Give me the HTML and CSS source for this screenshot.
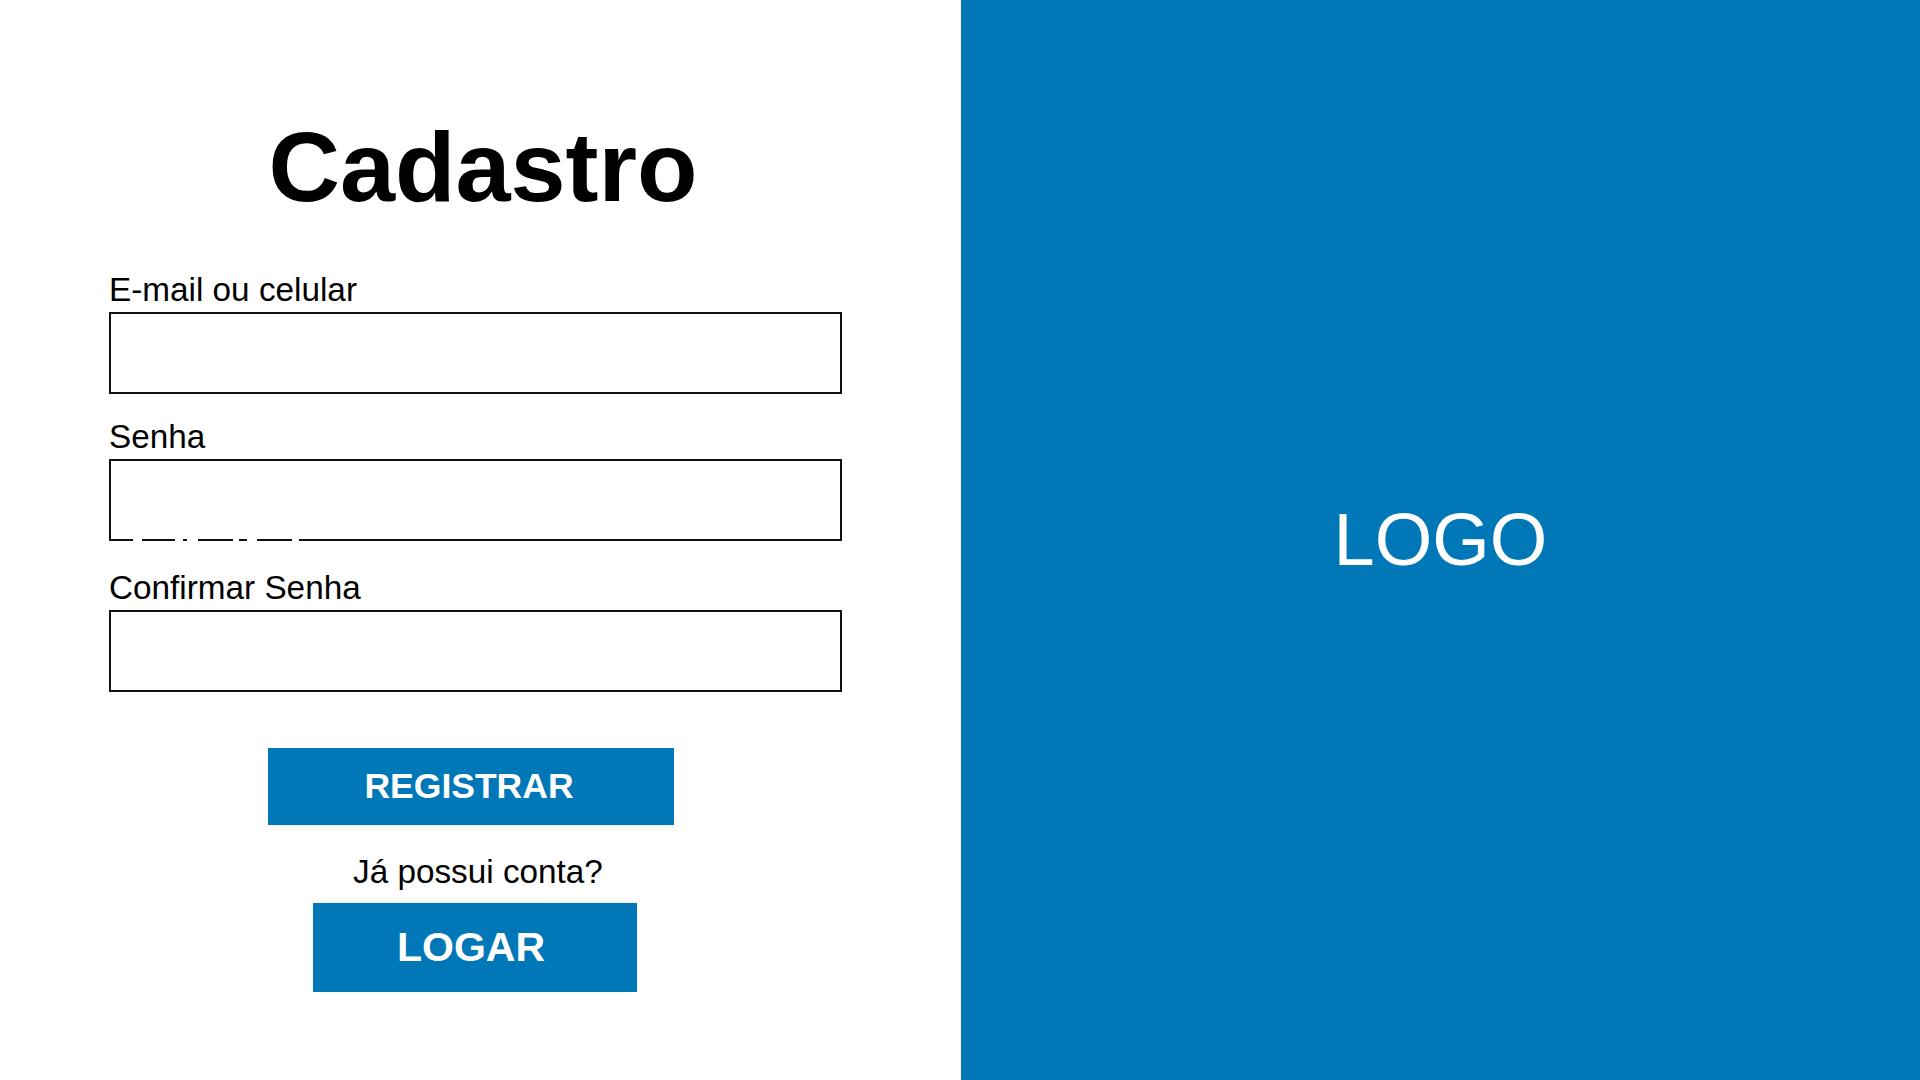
FILE: index.html
```html
<!DOCTYPE html>
<html lang="pt-BR">
<head>
<meta charset="utf-8">
<title>Cadastro</title>
<link rel="stylesheet" href="styles.css">
</head>
<body>
<main class="page">
  <section class="form-panel">
    <h1 class="title">Cadastro</h1>
    <form class="form">
      <div class="field field-email">
        <label class="label" for="email">E-mail ou celular</label>
        <input class="input" id="email" type="text">
      </div>
      <div class="field field-senha">
        <label class="label" for="senha">Senha</label>
        <div class="input-wrap">
          <input class="input" id="senha" type="password">
          <span class="glitch"></span>
        </div>
      </div>
      <div class="field">
        <label class="label" for="confirmar">Confirmar Senha</label>
        <input class="input" id="confirmar" type="password">
      </div>
      <button class="btn btn-register" type="button">REGISTRAR</button>
      <p class="question">Já possui conta?</p>
      <button class="btn btn-login" type="button">LOGAR</button>
    </form>
  </section>
  <section class="brand-panel">
    <span class="logo">LOGO</span>
  </section>
</main>
</body>
</html>
```

FILE: styles.css
```css
html, body {
  margin: 0;
  padding: 0;
  width: 1920px;
  height: 1080px;
  overflow: hidden;
  background: #ffffff;
  font-family: "Liberation Sans", Arial, sans-serif;
  color: #000;
}

.page {
  display: grid;
  grid-template-columns: 961px 1fr;
  height: 1080px;
}

.form-panel {
  display: flex;
  flex-direction: column;
  padding-top: 117px;
  padding-left: 109px;
  box-sizing: border-box;
}

.title {
  margin: 0;
  width: 748px;
  text-align: center;
  font-size: 99px;
  line-height: 99px;
  font-weight: 700;
}

.form {
  display: flex;
  flex-direction: column;
  align-items: flex-start;
  margin-top: 55px;
}

.field {
  display: flex;
  flex-direction: column;
}

.field-email {
  margin-bottom: 24px;
}

.field-senha {
  margin-bottom: 28px;
}

.label {
  font-size: 33.3px;
  line-height: 38px;
  margin-bottom: 3px;
}

.input-wrap {
  position: relative;
}

.input {
  display: block;
  width: 733px;
  height: 82px;
  box-sizing: border-box;
  border: 2px solid #111;
  background: #fff;
  margin: 0;
  padding: 0 12px;
  font-size: 28px;
  font-family: inherit;
  outline: none;
}

.glitch {
  position: absolute;
  left: 0;
  bottom: 0;
  width: 200px;
  height: 2px;
  background: linear-gradient(to right,
    transparent 0 24px,
    #fff 24px 33px,
    transparent 33px 66px,
    #fff 66px 74px,
    transparent 74px 78px,
    #fff 78px 89px,
    transparent 89px 124px,
    #fff 124px 130px,
    transparent 130px 138px,
    #fff 138px 148px,
    transparent 148px 183px,
    #fff 183px 190px,
    transparent 190px 200px);
}

.btn {
  display: flex;
  align-items: center;
  justify-content: center;
  border: none;
  margin: 0;
  padding: 0;
  background: #0077b7;
  color: #fff;
  font-family: inherit;
  font-weight: 700;
  cursor: pointer;
}

.btn-register {
  width: 406px;
  height: 77px;
  margin-top: 56px;
  margin-left: 159px;
  padding-right: 4px;
  font-size: 35.5px;
}

.question {
  margin: 28px 0 0 244px;
  font-size: 33.3px;
  line-height: 38px;
}

.btn-login {
  width: 324px;
  height: 89px;
  margin-top: 12px;
  margin-left: 204px;
  padding-right: 8px;
  font-size: 41px;
}

.brand-panel {
  background: #0077b7;
  display: flex;
  align-items: center;
  justify-content: center;
}

.logo {
  color: #fff;
  font-size: 74px;
  line-height: 1;
  font-weight: 400;
}
```
